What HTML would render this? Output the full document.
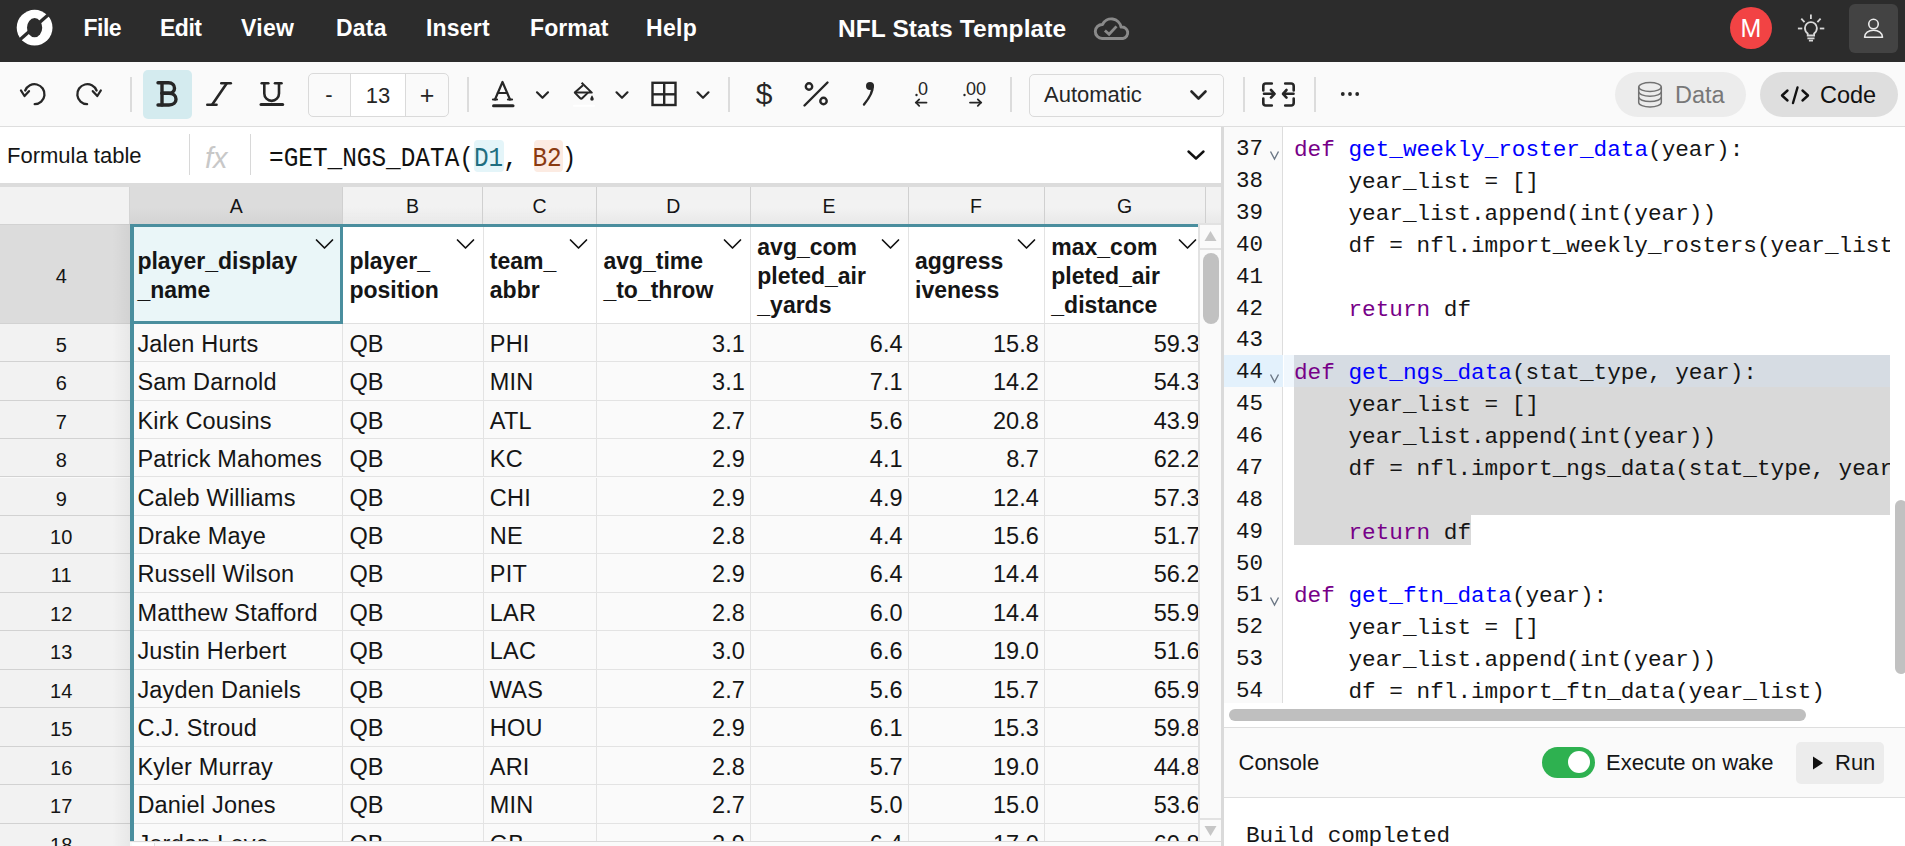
<!DOCTYPE html><html><head><meta charset="utf-8"><style>
*{box-sizing:border-box;margin:0;padding:0}
html,body{width:1905px;height:846px;overflow:hidden;background:#fff;font-family:"Liberation Sans",sans-serif;color:#151515}
.a{position:absolute}
svg{position:absolute;overflow:visible}
.menu{position:absolute;top:14px;font-size:23px;font-weight:700;color:#fff;line-height:28px;white-space:pre;letter-spacing:-0.4px}
.sep{position:absolute;width:2px;background:#dcdcdc}
.ch{position:absolute;top:187px;height:37px;border-right:1.5px solid #d0d0d0;text-align:center;font-size:19.5px;line-height:39px;color:#151515}
.rh{position:absolute;left:0;width:130.4px;padding-right:8px;background:#f2f2f2;border-bottom:1px solid #d2d2d2;text-align:center;font-size:20px;color:#151515}
.c{position:absolute;border-right:1px solid #e3e3e3;border-bottom:1px solid #e3e3e3;font-size:23.5px;white-space:nowrap;overflow:hidden;color:#151515;height:38.45px;line-height:40px;letter-spacing:0.2px}
.l{padding-left:6px}
.r{text-align:right;padding-right:5.5px;letter-spacing:0}
.hc{position:absolute;border-right:1px solid #e3e3e3;background:#fff;font-size:23px;font-weight:700;line-height:29px;color:#151515;display:flex;align-items:center;padding-left:6px}
.ln{position:absolute;left:0;width:39px;text-align:right;font-family:"Liberation Mono",monospace;font-size:22.5px;color:#151515;height:32px;line-height:35px}
.cl{position:absolute;left:70px;font-family:"Liberation Mono",monospace;font-size:22.7px;color:#151515;white-space:pre;height:32px;line-height:37px}
.kw{color:#770088}.fn{color:#0000ff}
</style></head><body>
<div class="a" style="left:0;top:0;width:1905px;height:62px;background:#2c2c2c"></div>
<svg style="left:0;top:0" width="70" height="62" viewBox="0 0 70 62">
<circle cx="34.6" cy="27.7" r="17.9" fill="#fff"/>
<ellipse cx="34.6" cy="27.7" rx="7.6" ry="9.6" fill="#2c2c2c"/>
<line x1="19" y1="40.5" x2="50" y2="13.3" stroke="#2c2c2c" stroke-width="3.3"/>
</svg>
<div class="menu" style="left:83.5px;letter-spacing:-0.5px">File</div>
<div class="menu" style="left:160px;letter-spacing:-0.5px">Edit</div>
<div class="menu" style="left:241px;letter-spacing:0.3px">View</div>
<div class="menu" style="left:336px;letter-spacing:0.2px">Data</div>
<div class="menu" style="left:426px;letter-spacing:0.2px">Insert</div>
<div class="menu" style="left:530px;letter-spacing:0.1px">Format</div>
<div class="menu" style="left:646px;letter-spacing:0.3px">Help</div>
<div class="menu" style="left:838px;font-size:24.5px;top:14.5px;letter-spacing:0.1px">NFL Stats Template</div>
<svg style="left:1090px;top:12px" width="45" height="34" viewBox="0 0 45 34">
<path d="M12.1 26.5 A7 7 0 0 1 12.5 12.5 A9.8 9.8 0 0 1 31 15.1 A5.7 5.7 0 0 1 32.9 26.5 Z" fill="none" stroke="#8a8a8a" stroke-width="2.9" stroke-linejoin="round"/>
<path d="M14.9 18.5 L19.1 22.3 L26.5 14.4" fill="none" stroke="#8a8a8a" stroke-width="2.8" stroke-linejoin="miter"/>
</svg>
<div class="a" style="left:1730px;top:7px;width:42px;height:42px;border-radius:50%;background:#f24344"></div>
<div class="a" style="left:1730px;top:7px;width:42px;height:42px;text-align:center;line-height:42px;font-size:25px;color:#fff">M</div>
<svg style="left:1790px;top:10px" width="40" height="40" viewBox="0 0 40 40">
<g fill="none" stroke="#d9d9d9" stroke-width="1.8">
<path d="M20.9 4.5 V9.1"/><path d="M11.3 8.7 L14.5 12.1"/><path d="M30.6 8.7 L27.4 12.1"/>
<path d="M7.9 18.5 H12.3"/><path d="M29.8 18.5 H34.3"/>
<path d="M17.7 25.5 V23.5 C15.5 22 14.9 20 14.9 18.1 A6 6 0 0 1 26.9 18.1 C26.9 20 26.3 22 24.1 23.5 V25.5 Z"/>
<path d="M17.4 28.4 H24.5"/><path d="M18.9 30.6 H23"/>
</g></svg>
<div class="a" style="left:1849px;top:4px;width:49px;height:49px;border-radius:6px;background:#434343"></div>
<svg style="left:1849px;top:4px" width="49" height="49" viewBox="0 0 49 49">
<g fill="none" stroke="#ebebeb" stroke-width="1.6">
<circle cx="24.5" cy="20.05" r="4.75"/>
<path d="M15.6 33.3 C15.6 29 19.5 26.3 24.5 26.3 C29.5 26.3 33.5 29 33.5 33.3 Z" stroke-linejoin="round"/>
</g></svg>
<div class="a" style="left:0;top:62px;width:1905px;height:65px;background:#fafafa;border-bottom:1px solid #dedede"></div>
<svg style="left:0;top:62px" width="120" height="64" viewBox="0 0 120 64">
<g fill="none" stroke="#262626" stroke-width="2.3" stroke-linecap="round" stroke-linejoin="round">
<path d="M34.7 42.2 A10 10 0 1 0 25.2 28.5"/>
<path d="M21 28.5 L24.5 34 L29 29.2"/>
<path d="M87.1 42.2 A10 10 0 1 1 96.6 28.5"/>
<path d="M100.8 28.5 L97.3 34 L92.8 29.2"/>
</g></svg>
<div class="sep" style="left:130px;top:77px;height:35px"></div>
<div class="a" style="left:143px;top:70px;width:49px;height:49px;border-radius:5px;background:#d4ebef"></div>
<svg style="left:150px;top:76px" width="40" height="36" viewBox="0 0 40 36"><g fill="none" stroke="#262626" stroke-width="3.4" stroke-linecap="round" stroke-linejoin="round">
<path d="M8 6.8 H18.5 C22.5 6.8 24.5 9.5 24.5 12.2 C24.5 15 22.5 17.3 18.5 17.3 H12"/>
<path d="M12 17.3 H19 C23.5 17.3 26 20 26 23.2 C26 26.5 23.5 29 19 29 H8"/>
<path d="M12 6.8 V29"/></g></svg>
<svg style="left:195px;top:62px" width="100" height="64" viewBox="0 0 100 64">
<g fill="none" stroke="#262626" stroke-width="2.6" stroke-linecap="round">
<path d="M26.3 21.3 H35.8"/><path d="M12.3 42.7 H21.5"/><path d="M31.8 21.3 L17.1 42.7"/>
<path d="M66.7 21.3 H73.3"/><path d="M80 21.3 H86.5"/>
<path d="M69.3 21.3 V31.5 A7.35 7.35 0 0 0 84 31.5 V21.3"/>
<path d="M66 42.5 H87.7" stroke-width="3"/>
</g></svg>
<div class="a" style="left:307.5px;top:72.5px;width:141px;height:44px;border:1px solid #dadada;border-radius:5px;background:#fafafa"></div>
<div class="a" style="left:350px;top:73.5px;width:56px;height:42px;background:#fff;border-left:1px solid #dadada;border-right:1px solid #dadada"></div>
<div class="a" style="left:308px;top:72.5px;width:42px;height:44px;text-align:center;line-height:44px;font-size:22px;color:#262626">-</div>
<div class="a" style="left:350px;top:72.5px;width:56px;height:44px;text-align:center;line-height:45px;font-size:22px;color:#262626">13</div>
<div class="a" style="left:406px;top:72.5px;width:42px;height:44px;text-align:center;line-height:44px;font-size:25px;color:#262626">+</div>
<div class="sep" style="left:467px;top:77px;height:35px"></div>
<svg style="left:480px;top:62px" width="250" height="64" viewBox="0 0 250 64">
<g fill="none" stroke="#262626" stroke-width="2.2" stroke-linecap="round" stroke-linejoin="round">
<path d="M15 37.5 l7.5 -17.5 l7.5 17.5"/><path d="M17.8 31 h9.4"/>
<path d="M13 37.5 h4"/><path d="M28 37.5 h4"/>
<path d="M57 30.3 l5.5 5.5 l5.5 -5.5"/>
<path d="M136.5 30.3 l5.5 5.5 l5.5 -5.5"/>
<path d="M217.5 30.3 l5.5 5.5 l5.5 -5.5"/>
</g>
<rect x="12" y="42.2" width="22.5" height="3" rx="1.5" fill="#262626"/>
<g fill="none" stroke="#262626" stroke-width="2" stroke-linejoin="round">
<path d="M101.6 20.7 L111.8 30.6 H94.8"/>
<path d="M103 23.2 L94.8 30.6 L100 36 Q101.2 37.2 102.4 36 L108 30.6"/>
</g>
<path d="M112 33.2 q1.8 2.6 1.8 3.8 a1.8 1.8 0 0 1 -3.6 0 q0 -1.2 1.8 -3.8z" fill="#262626"/>
<rect x="93" y="42.8" width="22" height="2" rx="1" fill="#fff"/>
<g fill="none" stroke="#262626" stroke-width="2.4">
<rect x="172.5" y="20.8" width="23" height="22.2"/>
<path d="M184.2 20.8 v22.2"/><path d="M172.5 32.3 h23"/>
</g>
</svg>
<div class="sep" style="left:728px;top:77px;height:35px"></div>
<div class="a" style="left:748px;top:76px;width:32px;text-align:center;font-size:30px;line-height:36px;color:#262626">$</div>
<svg style="left:790px;top:62px" width="220" height="64" viewBox="0 0 220 64">
<g fill="none" stroke="#262626" stroke-width="2.4" stroke-linecap="round">
<circle cx="19" cy="24.5" r="3.2"/><circle cx="33.5" cy="39" r="3.2"/>
<path d="M37.5 20.5 l-23 23"/>
<path d="M82.5 23.5 Q83.5 31 74 42.5"/>
<path d="M126 40.6 h10.5" stroke-width="1.8"/><path d="M129.2 37.4 l-3.2 3.2 l3.2 3.2" stroke-width="1.8"/>
<path d="M180 40.6 h11" stroke-width="1.8"/><path d="M187.8 37.4 l3.2 3.2 l-3.2 3.2" stroke-width="1.8"/>
</g>
<circle cx="80" cy="24" r="4" fill="#262626"/>
<circle cx="126.5" cy="33" r="1.2" fill="#262626"/>
<circle cx="174.5" cy="33" r="1.2" fill="#262626"/>
</svg>
<div class="a" style="left:918px;top:79px;font-size:18px;line-height:20px;color:#262626">0</div>
<div class="a" style="left:966px;top:79px;font-size:18px;line-height:20px;color:#262626">00</div>
<div class="sep" style="left:1010px;top:77px;height:35px"></div>
<div class="a" style="left:1028.5px;top:73.5px;width:195px;height:43px;border:1px solid #dadada;border-radius:5px;background:#fafafa"></div>
<div class="a" style="left:1044px;top:72.5px;font-size:22px;line-height:43px;color:#262626">Automatic</div>
<svg style="left:1180px;top:73px" width="40" height="44" viewBox="0 0 40 44">
<path d="M11.5 18.5 l7 7 l7 -7" fill="none" stroke="#262626" stroke-width="2.6" stroke-linecap="round" stroke-linejoin="round"/></svg>
<div class="sep" style="left:1242.5px;top:77px;height:35px"></div>
<svg style="left:1250px;top:62px" width="120" height="64" viewBox="0 0 120 64">
<g fill="none" stroke="#262626" stroke-width="2.6" stroke-linecap="round" stroke-linejoin="round">
<path d="M13.3 28.5 v-4.5 a2.5 2.5 0 0 1 2.5 -2.5 h6"/><path d="M13.3 36.5 v4.5 a2.5 2.5 0 0 0 2.5 2.5 h6"/>
<path d="M43.7 28.5 v-4.5 a2.5 2.5 0 0 0 -2.5 -2.5 h-6"/><path d="M43.7 36.5 v4.5 a2.5 2.5 0 0 1 -2.5 2.5 h-6"/>
<path d="M14 31.8 h10"/><path d="M21 28 l3.5 3.8 l-3.5 3.8"/>
<path d="M43.5 31.8 h-10"/><path d="M36.5 28 l-3.5 3.8 l3.5 3.8"/>
</g>
<circle cx="92.8" cy="32" r="1.9" fill="#262626"/><circle cx="100" cy="32" r="1.9" fill="#262626"/><circle cx="107.2" cy="32" r="1.9" fill="#262626"/>
</svg>
<div class="sep" style="left:1314px;top:77px;height:35px"></div>
<div class="a" style="left:1615px;top:72px;width:131px;height:45px;border-radius:23px;background:#ececec"></div>
<svg style="left:1630px;top:72px" width="40" height="45" viewBox="0 0 40 45">
<g fill="none" stroke="#727272" stroke-width="1.5">
<ellipse cx="20" cy="15" rx="11.3" ry="4.45"/>
<path d="M8.7 15 V30.45 A11.3 4.45 0 0 0 31.3 30.45 V15"/>
<path d="M8.7 19.75 A11.3 4.45 0 0 0 31.3 19.75"/><path d="M8.7 25.05 A11.3 4.45 0 0 0 31.3 25.05"/>
</g></svg>
<div class="a" style="left:1675px;top:73px;font-size:23.5px;line-height:45px;color:#787878">Data</div>
<div class="a" style="left:1760px;top:72px;width:138px;height:45px;border-radius:23px;background:#dedede"></div>
<svg style="left:1775px;top:72px" width="40" height="45" viewBox="0 0 40 45">
<g fill="none" stroke="#111" stroke-width="2.4" stroke-linecap="round" stroke-linejoin="round">
<path d="M12.5 18.5 l-5.5 5 l5.5 5"/><path d="M27.5 18.5 l5.5 5 l-5.5 5"/><path d="M22.5 15.5 l-4.5 15.5"/>
</g></svg>
<div class="a" style="left:1820px;top:73px;font-size:23.5px;line-height:45px;color:#111">Code</div>
<div class="a" style="left:0;top:127px;width:1221px;height:56px;background:#fff"></div>
<div class="a" style="left:7px;top:127px;font-size:22px;line-height:57px;color:#151515">Formula table</div>
<div class="sep" style="left:188.5px;top:134px;height:41px;width:1.5px;background:#d8d8d8"></div>
<div class="a" style="left:205px;top:127px;font-size:29px;font-style:italic;line-height:62px;color:#c8c8c8">fx</div>
<div class="sep" style="left:249.5px;top:134px;height:41px;width:1.5px;background:#d8d8d8"></div>
<div class="a" style="left:473.5px;top:140px;width:30px;height:32px;border-radius:4px;background:#e4f5f9"></div>
<div class="a" style="left:533.5px;top:140px;width:29.5px;height:32px;border-radius:4px;background:#fcebe2"></div>
<div class="a" style="left:269px;top:128px;font-family:'Liberation Mono';font-size:24.4px;line-height:63px;white-space:pre;color:#111;transform:scaleY(1.13);transform-origin:0 38px">=GET_NGS_DATA(<span style="color:#1f6e80">D1</span>, <span style="color:#8a3a10">B2</span>)</div>
<svg style="left:1180px;top:140px" width="30" height="30" viewBox="0 0 30 30">
<path d="M8.5 11.5 l7.5 7 l7.5 -7" fill="none" stroke="#111" stroke-width="2.4" stroke-linecap="round" stroke-linejoin="round"/></svg>
<div class="a" style="left:0;top:182.5px;width:1221px;height:4.5px;background:#dcdcdc"></div>
<div class="a" style="left:0;top:187px;width:1221px;height:37px;background:#f2f2f2"></div>
<div class="a" style="left:0;top:187px;width:130.4px;height:37px;border-right:1px solid #d4d4d4"></div>
<div class="ch" style="left:1205px;width:16.7px;background:linear-gradient(to bottom,#f2f2f2 55%,rgba(0,0,0,0.04)),#f2f2f2"></div>
<div class="ch" style="left:1044.3px;width:161.40000000000003px;background:linear-gradient(to bottom,#f2f2f2 55%,rgba(0,0,0,0.04)),#f2f2f2">G</div>
<div class="ch" style="left:908px;width:136.99999999999994px;background:linear-gradient(to bottom,#f2f2f2 55%,rgba(0,0,0,0.04)),#f2f2f2">F</div>
<div class="ch" style="left:750.3px;width:158.40000000000003px;background:linear-gradient(to bottom,#f2f2f2 55%,rgba(0,0,0,0.04)),#f2f2f2">E</div>
<div class="ch" style="left:596.4px;width:154.59999999999997px;background:linear-gradient(to bottom,#f2f2f2 55%,rgba(0,0,0,0.04)),#f2f2f2">D</div>
<div class="ch" style="left:482.8px;width:114.29999999999997px;background:linear-gradient(to bottom,#f2f2f2 55%,rgba(0,0,0,0.04)),#f2f2f2">C</div>
<div class="ch" style="left:342.4px;width:141.10000000000002px;background:linear-gradient(to bottom,#f2f2f2 55%,rgba(0,0,0,0.04)),#f2f2f2">B</div>
<div class="ch" style="left:130.4px;width:212.69999999999996px;background:linear-gradient(to bottom,#dcdcdc 55%,rgba(0,0,0,0.04)),#dcdcdc">A</div>
<div class="a" style="left:0;top:224px;width:1221px;height:617px;background:#fafafa"></div>
<div class="rh" style="top:224px;height:99.69999999999999px;line-height:102.69999999999999px;background:#dcdcdc;border-top:1px solid #d2d2d2">4</div>
<div class="rh" style="top:323.7px;height:38.45px;line-height:42.45px">5</div>
<div class="c l" style="left:131.4px;top:323.7px;width:211.99999999999997px">Jalen Hurts</div>
<div class="c l" style="left:343.4px;top:323.7px;width:140.40000000000003px">QB</div>
<div class="c l" style="left:483.8px;top:323.7px;width:113.59999999999997px">PHI</div>
<div class="c r" style="left:597.4px;top:323.7px;width:153.89999999999998px">3.1</div>
<div class="c r" style="left:751.3px;top:323.7px;width:157.70000000000005px">6.4</div>
<div class="c r" style="left:909px;top:323.7px;width:136.29999999999995px">15.8</div>
<div class="c r" style="left:1045.3px;top:323.7px;width:160.70000000000005px">59.3</div>
<div class="rh" style="top:362.15px;height:38.45px;line-height:42.45px">6</div>
<div class="c l" style="left:131.4px;top:362.15px;width:211.99999999999997px">Sam Darnold</div>
<div class="c l" style="left:343.4px;top:362.15px;width:140.40000000000003px">QB</div>
<div class="c l" style="left:483.8px;top:362.15px;width:113.59999999999997px">MIN</div>
<div class="c r" style="left:597.4px;top:362.15px;width:153.89999999999998px">3.1</div>
<div class="c r" style="left:751.3px;top:362.15px;width:157.70000000000005px">7.1</div>
<div class="c r" style="left:909px;top:362.15px;width:136.29999999999995px">14.2</div>
<div class="c r" style="left:1045.3px;top:362.15px;width:160.70000000000005px">54.3</div>
<div class="rh" style="top:400.6px;height:38.45px;line-height:42.45px">7</div>
<div class="c l" style="left:131.4px;top:400.6px;width:211.99999999999997px">Kirk Cousins</div>
<div class="c l" style="left:343.4px;top:400.6px;width:140.40000000000003px">QB</div>
<div class="c l" style="left:483.8px;top:400.6px;width:113.59999999999997px">ATL</div>
<div class="c r" style="left:597.4px;top:400.6px;width:153.89999999999998px">2.7</div>
<div class="c r" style="left:751.3px;top:400.6px;width:157.70000000000005px">5.6</div>
<div class="c r" style="left:909px;top:400.6px;width:136.29999999999995px">20.8</div>
<div class="c r" style="left:1045.3px;top:400.6px;width:160.70000000000005px">43.9</div>
<div class="rh" style="top:439.05px;height:38.45px;line-height:42.45px">8</div>
<div class="c l" style="left:131.4px;top:439.05px;width:211.99999999999997px">Patrick Mahomes</div>
<div class="c l" style="left:343.4px;top:439.05px;width:140.40000000000003px">QB</div>
<div class="c l" style="left:483.8px;top:439.05px;width:113.59999999999997px">KC</div>
<div class="c r" style="left:597.4px;top:439.05px;width:153.89999999999998px">2.9</div>
<div class="c r" style="left:751.3px;top:439.05px;width:157.70000000000005px">4.1</div>
<div class="c r" style="left:909px;top:439.05px;width:136.29999999999995px">8.7</div>
<div class="c r" style="left:1045.3px;top:439.05px;width:160.70000000000005px">62.2</div>
<div class="rh" style="top:477.5px;height:38.45px;line-height:42.45px">9</div>
<div class="c l" style="left:131.4px;top:477.5px;width:211.99999999999997px">Caleb Williams</div>
<div class="c l" style="left:343.4px;top:477.5px;width:140.40000000000003px">QB</div>
<div class="c l" style="left:483.8px;top:477.5px;width:113.59999999999997px">CHI</div>
<div class="c r" style="left:597.4px;top:477.5px;width:153.89999999999998px">2.9</div>
<div class="c r" style="left:751.3px;top:477.5px;width:157.70000000000005px">4.9</div>
<div class="c r" style="left:909px;top:477.5px;width:136.29999999999995px">12.4</div>
<div class="c r" style="left:1045.3px;top:477.5px;width:160.70000000000005px">57.3</div>
<div class="rh" style="top:515.95px;height:38.45px;line-height:42.45px">10</div>
<div class="c l" style="left:131.4px;top:515.95px;width:211.99999999999997px">Drake Maye</div>
<div class="c l" style="left:343.4px;top:515.95px;width:140.40000000000003px">QB</div>
<div class="c l" style="left:483.8px;top:515.95px;width:113.59999999999997px">NE</div>
<div class="c r" style="left:597.4px;top:515.95px;width:153.89999999999998px">2.8</div>
<div class="c r" style="left:751.3px;top:515.95px;width:157.70000000000005px">4.4</div>
<div class="c r" style="left:909px;top:515.95px;width:136.29999999999995px">15.6</div>
<div class="c r" style="left:1045.3px;top:515.95px;width:160.70000000000005px">51.7</div>
<div class="rh" style="top:554.4px;height:38.45px;line-height:42.45px">11</div>
<div class="c l" style="left:131.4px;top:554.4px;width:211.99999999999997px">Russell Wilson</div>
<div class="c l" style="left:343.4px;top:554.4px;width:140.40000000000003px">QB</div>
<div class="c l" style="left:483.8px;top:554.4px;width:113.59999999999997px">PIT</div>
<div class="c r" style="left:597.4px;top:554.4px;width:153.89999999999998px">2.9</div>
<div class="c r" style="left:751.3px;top:554.4px;width:157.70000000000005px">6.4</div>
<div class="c r" style="left:909px;top:554.4px;width:136.29999999999995px">14.4</div>
<div class="c r" style="left:1045.3px;top:554.4px;width:160.70000000000005px">56.2</div>
<div class="rh" style="top:592.85px;height:38.45px;line-height:42.45px">12</div>
<div class="c l" style="left:131.4px;top:592.85px;width:211.99999999999997px">Matthew Stafford</div>
<div class="c l" style="left:343.4px;top:592.85px;width:140.40000000000003px">QB</div>
<div class="c l" style="left:483.8px;top:592.85px;width:113.59999999999997px">LAR</div>
<div class="c r" style="left:597.4px;top:592.85px;width:153.89999999999998px">2.8</div>
<div class="c r" style="left:751.3px;top:592.85px;width:157.70000000000005px">6.0</div>
<div class="c r" style="left:909px;top:592.85px;width:136.29999999999995px">14.4</div>
<div class="c r" style="left:1045.3px;top:592.85px;width:160.70000000000005px">55.9</div>
<div class="rh" style="top:631.3px;height:38.45px;line-height:42.45px">13</div>
<div class="c l" style="left:131.4px;top:631.3px;width:211.99999999999997px">Justin Herbert</div>
<div class="c l" style="left:343.4px;top:631.3px;width:140.40000000000003px">QB</div>
<div class="c l" style="left:483.8px;top:631.3px;width:113.59999999999997px">LAC</div>
<div class="c r" style="left:597.4px;top:631.3px;width:153.89999999999998px">3.0</div>
<div class="c r" style="left:751.3px;top:631.3px;width:157.70000000000005px">6.6</div>
<div class="c r" style="left:909px;top:631.3px;width:136.29999999999995px">19.0</div>
<div class="c r" style="left:1045.3px;top:631.3px;width:160.70000000000005px">51.6</div>
<div class="rh" style="top:669.75px;height:38.45px;line-height:42.45px">14</div>
<div class="c l" style="left:131.4px;top:669.75px;width:211.99999999999997px">Jayden Daniels</div>
<div class="c l" style="left:343.4px;top:669.75px;width:140.40000000000003px">QB</div>
<div class="c l" style="left:483.8px;top:669.75px;width:113.59999999999997px">WAS</div>
<div class="c r" style="left:597.4px;top:669.75px;width:153.89999999999998px">2.7</div>
<div class="c r" style="left:751.3px;top:669.75px;width:157.70000000000005px">5.6</div>
<div class="c r" style="left:909px;top:669.75px;width:136.29999999999995px">15.7</div>
<div class="c r" style="left:1045.3px;top:669.75px;width:160.70000000000005px">65.9</div>
<div class="rh" style="top:708.2px;height:38.45px;line-height:42.45px">15</div>
<div class="c l" style="left:131.4px;top:708.2px;width:211.99999999999997px">C.J. Stroud</div>
<div class="c l" style="left:343.4px;top:708.2px;width:140.40000000000003px">QB</div>
<div class="c l" style="left:483.8px;top:708.2px;width:113.59999999999997px">HOU</div>
<div class="c r" style="left:597.4px;top:708.2px;width:153.89999999999998px">2.9</div>
<div class="c r" style="left:751.3px;top:708.2px;width:157.70000000000005px">6.1</div>
<div class="c r" style="left:909px;top:708.2px;width:136.29999999999995px">15.3</div>
<div class="c r" style="left:1045.3px;top:708.2px;width:160.70000000000005px">59.8</div>
<div class="rh" style="top:746.6500000000001px;height:38.45px;line-height:42.45px">16</div>
<div class="c l" style="left:131.4px;top:746.6500000000001px;width:211.99999999999997px">Kyler Murray</div>
<div class="c l" style="left:343.4px;top:746.6500000000001px;width:140.40000000000003px">QB</div>
<div class="c l" style="left:483.8px;top:746.6500000000001px;width:113.59999999999997px">ARI</div>
<div class="c r" style="left:597.4px;top:746.6500000000001px;width:153.89999999999998px">2.8</div>
<div class="c r" style="left:751.3px;top:746.6500000000001px;width:157.70000000000005px">5.7</div>
<div class="c r" style="left:909px;top:746.6500000000001px;width:136.29999999999995px">19.0</div>
<div class="c r" style="left:1045.3px;top:746.6500000000001px;width:160.70000000000005px">44.8</div>
<div class="rh" style="top:785.1px;height:38.45px;line-height:42.45px">17</div>
<div class="c l" style="left:131.4px;top:785.1px;width:211.99999999999997px">Daniel Jones</div>
<div class="c l" style="left:343.4px;top:785.1px;width:140.40000000000003px">QB</div>
<div class="c l" style="left:483.8px;top:785.1px;width:113.59999999999997px">MIN</div>
<div class="c r" style="left:597.4px;top:785.1px;width:153.89999999999998px">2.7</div>
<div class="c r" style="left:751.3px;top:785.1px;width:157.70000000000005px">5.0</div>
<div class="c r" style="left:909px;top:785.1px;width:136.29999999999995px">15.0</div>
<div class="c r" style="left:1045.3px;top:785.1px;width:160.70000000000005px">53.6</div>
<div class="rh" style="top:823.55px;height:38.45px;line-height:42.45px">18</div>
<div class="c l" style="left:131.4px;top:823.55px;width:211.99999999999997px">Jordan Love</div>
<div class="c l" style="left:343.4px;top:823.55px;width:140.40000000000003px">QB</div>
<div class="c l" style="left:483.8px;top:823.55px;width:113.59999999999997px">GB</div>
<div class="c r" style="left:597.4px;top:823.55px;width:153.89999999999998px">2.9</div>
<div class="c r" style="left:751.3px;top:823.55px;width:157.70000000000005px">6.4</div>
<div class="c r" style="left:909px;top:823.55px;width:136.29999999999995px">17.0</div>
<div class="c r" style="left:1045.3px;top:823.55px;width:160.70000000000005px">60.8</div>
<div class="hc" style="left:131.4px;top:224px;width:211.99999999999997px;height:99.69999999999999px;border-bottom:1px solid #e0e0e0;background:#eaf6f8"><div style="padding-top:5.5px">player_display<br>_name</div></div>
<svg style="left:315.4px;top:236px" width="20" height="16" viewBox="0 0 20 16"><path d="M1.5 4 l8 8 l8 -8" fill="none" stroke="#111" stroke-width="1.7" stroke-linecap="round" stroke-linejoin="round"/></svg>
<div class="hc" style="left:343.4px;top:224px;width:140.40000000000003px;height:99.69999999999999px;border-bottom:1px solid #e0e0e0;background:#fff"><div style="padding-top:5.5px">player_<br>position</div></div>
<svg style="left:455.8px;top:236px" width="20" height="16" viewBox="0 0 20 16"><path d="M1.5 4 l8 8 l8 -8" fill="none" stroke="#111" stroke-width="1.7" stroke-linecap="round" stroke-linejoin="round"/></svg>
<div class="hc" style="left:483.8px;top:224px;width:113.59999999999997px;height:99.69999999999999px;border-bottom:1px solid #e0e0e0;background:#fff"><div style="padding-top:5.5px">team_<br>abbr</div></div>
<svg style="left:569.4px;top:236px" width="20" height="16" viewBox="0 0 20 16"><path d="M1.5 4 l8 8 l8 -8" fill="none" stroke="#111" stroke-width="1.7" stroke-linecap="round" stroke-linejoin="round"/></svg>
<div class="hc" style="left:597.4px;top:224px;width:153.89999999999998px;height:99.69999999999999px;border-bottom:1px solid #e0e0e0;background:#fff"><div style="padding-top:5.5px">avg_time<br>_to_throw</div></div>
<svg style="left:723.3px;top:236px" width="20" height="16" viewBox="0 0 20 16"><path d="M1.5 4 l8 8 l8 -8" fill="none" stroke="#111" stroke-width="1.7" stroke-linecap="round" stroke-linejoin="round"/></svg>
<div class="hc" style="left:751.3px;top:224px;width:157.70000000000005px;height:99.69999999999999px;border-bottom:1px solid #e0e0e0;background:#fff"><div style="padding-top:5.5px">avg_com<br>pleted_air<br>_yards</div></div>
<svg style="left:881px;top:236px" width="20" height="16" viewBox="0 0 20 16"><path d="M1.5 4 l8 8 l8 -8" fill="none" stroke="#111" stroke-width="1.7" stroke-linecap="round" stroke-linejoin="round"/></svg>
<div class="hc" style="left:909px;top:224px;width:136.29999999999995px;height:99.69999999999999px;border-bottom:1px solid #e0e0e0;background:#fff"><div style="padding-top:5.5px">aggress<br>iveness</div></div>
<svg style="left:1017.3px;top:236px" width="20" height="16" viewBox="0 0 20 16"><path d="M1.5 4 l8 8 l8 -8" fill="none" stroke="#111" stroke-width="1.7" stroke-linecap="round" stroke-linejoin="round"/></svg>
<div class="hc" style="left:1045.3px;top:224px;width:160.70000000000005px;height:99.69999999999999px;border-bottom:1px solid #e0e0e0;background:#fff"><div style="padding-top:5.5px">max_com<br>pleted_air<br>_distance</div></div>
<svg style="left:1178px;top:236px" width="20" height="16" viewBox="0 0 20 16"><path d="M1.5 4 l8 8 l8 -8" fill="none" stroke="#111" stroke-width="1.7" stroke-linecap="round" stroke-linejoin="round"/></svg>
<div class="a" style="left:130.4px;top:224px;width:213px;height:100px;border:3.3px solid #4a8e9e"></div>
<div class="a" style="left:130.4px;top:224px;width:1068px;height:3.2px;background:#4a8e9e"></div>
<div class="a" style="left:130.4px;top:224px;width:3.3px;height:617px;background:#4a8e9e"></div>
<div class="a" style="left:1197.8px;top:223.3px;width:23.2px;height:617.7px;background:#fafafa;border-left:2px solid #e2e2e2;border-top:2.5px solid #e2e2e2"></div>
<div class="a" style="left:1199.8px;top:225.8px;width:21.2px;height:24px;border-bottom:2px solid #e2e2e2"></div>
<svg style="left:1199px;top:226px" width="22" height="23" viewBox="0 0 22 23"><path d="M11.5 5 l6 10 h-12 z" fill="#c6c6c6"/></svg>
<div class="a" style="left:1203px;top:253px;width:15.5px;height:70.5px;border-radius:8px;background:#c1c1c1"></div>
<div class="a" style="left:1199.8px;top:817.5px;width:21.2px;height:23.5px;border-top:2px solid #e2e2e2"></div>
<svg style="left:1199px;top:818px" width="22" height="23" viewBox="0 0 22 23"><path d="M5.5 8 h12 l-6 10 z" fill="#c6c6c6"/></svg>
<div class="a" style="left:130.4px;top:841px;width:1091px;height:5px;background:#fafafa;border-top:1.5px solid #dadada"></div>
<div class="a" style="left:131.5px;top:843px;width:23.5px;height:3px;background:#fff;border-right:1px solid #e0e0e0"></div>
<div class="a" style="left:112px;top:224px;width:18.4px;height:622px;background:linear-gradient(to right,rgba(0,0,0,0),rgba(0,0,0,0.045))"></div>
<div class="a" style="left:1221px;top:127px;width:3px;height:719px;background:#dadada"></div>
<div class="a" style="left:1224px;top:127px;width:681px;height:600px;background:#fff;overflow:hidden">
<div class="a" style="left:0;top:0;width:59px;height:576px;background:#fafafa;border-right:1px solid #dddddd"></div>
<div class="a" style="left:0;top:228.26px;width:58.5px;height:31.88px;background:#e3f1fc"></div>
<div class="a" style="left:59.5px;top:228.26px;width:10.5px;height:31.88px;background:#f0f7fd"></div>
<div class="a" style="left:70px;top:228.26px;width:596px;height:31.88px;background:#d6dce3"></div>
<div class="a" style="left:70px;top:260.14px;width:596px;height:127.52px;background:#d9d9d9"></div>
<div class="a" style="left:70px;top:387.65999999999997px;width:177px;height:29.88px;background:#d9d9d9"></div>
<div class="ln" style="top:5.099999999999994px">37</div>
<svg style="left:45px;top:5.099999999999994px" width="14" height="32" viewBox="0 0 14 32"><path d="M1.5 19.5 L5.5 27 L9.5 19.5" fill="none" stroke="#6b7785" stroke-width="1.4"/></svg>
<div class="cl" style="top:5.099999999999994px"><span class="kw">def</span> <span class="fn">get_weekly_roster_data</span>(year):</div>
<div class="ln" style="top:36.97999999999999px">38</div>
<div class="cl" style="top:36.97999999999999px">    year_list = []</div>
<div class="ln" style="top:68.85999999999999px">39</div>
<div class="cl" style="top:68.85999999999999px">    year_list.append(int(year))</div>
<div class="ln" style="top:100.74px">40</div>
<div class="cl" style="top:100.74px">    df = nfl.import_weekly_rosters(year_list</div>
<div class="ln" style="top:132.62px">41</div>
<div class="cl" style="top:132.62px"></div>
<div class="ln" style="top:164.5px">42</div>
<div class="cl" style="top:164.5px">    <span class="kw">return</span> df</div>
<div class="ln" style="top:196.38px">43</div>
<div class="cl" style="top:196.38px"></div>
<div class="ln" style="top:228.26px">44</div>
<svg style="left:45px;top:228.26px" width="14" height="32" viewBox="0 0 14 32"><path d="M1.5 19.5 L5.5 27 L9.5 19.5" fill="none" stroke="#6b7785" stroke-width="1.4"/></svg>
<div class="cl" style="top:228.26px"><span class="kw">def</span> <span class="fn">get_ngs_data</span>(stat_type, year):</div>
<div class="ln" style="top:260.14px">45</div>
<div class="cl" style="top:260.14px">    year_list = []</div>
<div class="ln" style="top:292.02px">46</div>
<div class="cl" style="top:292.02px">    year_list.append(int(year))</div>
<div class="ln" style="top:323.9px">47</div>
<div class="cl" style="top:323.9px">    df = nfl.import_ngs_data(stat_type, year</div>
<div class="ln" style="top:355.78px">48</div>
<div class="cl" style="top:355.78px"></div>
<div class="ln" style="top:387.65999999999997px">49</div>
<div class="cl" style="top:387.65999999999997px">    <span class="kw">return</span> df</div>
<div class="ln" style="top:419.53999999999996px">50</div>
<div class="cl" style="top:419.53999999999996px"></div>
<div class="ln" style="top:451.41999999999996px">51</div>
<svg style="left:45px;top:451.41999999999996px" width="14" height="32" viewBox="0 0 14 32"><path d="M1.5 19.5 L5.5 27 L9.5 19.5" fill="none" stroke="#6b7785" stroke-width="1.4"/></svg>
<div class="cl" style="top:451.41999999999996px"><span class="kw">def</span> <span class="fn">get_ftn_data</span>(year):</div>
<div class="ln" style="top:483.29999999999995px">52</div>
<div class="cl" style="top:483.29999999999995px">    year_list = []</div>
<div class="ln" style="top:515.18px">53</div>
<div class="cl" style="top:515.18px">    year_list.append(int(year))</div>
<div class="ln" style="top:547.0600000000001px">54</div>
<div class="cl" style="top:547.0600000000001px">    df = nfl.import_ftn_data(year_list)</div>
<div class="a" style="left:666px;top:0;width:15px;height:600px;background:#fff"></div>
<div class="a" style="left:671px;top:373px;width:12px;height:174px;border-radius:6px;background:#c1c1c1"></div>
<div class="a" style="left:5px;top:582px;width:577px;height:12px;border-radius:6px;background:#bfbfbf"></div>
</div>
<div class="a" style="left:1224px;top:727px;width:681px;height:70.5px;background:#fafafa;border-top:1.5px solid #dedede;border-bottom:1.5px solid #dedede"></div>
<div class="a" style="left:1238.5px;top:727px;font-size:22px;line-height:71px;color:#151515">Console</div>
<div class="a" style="left:1542px;top:746.5px;width:53px;height:31px;border-radius:16px;background:#2eb150"></div>
<div class="a" style="left:1567.5px;top:751px;width:22px;height:22px;border-radius:50%;background:#fff"></div>
<div class="a" style="left:1606px;top:727px;font-size:22px;line-height:71px;color:#151515">Execute on wake</div>
<div class="a" style="left:1796px;top:742px;width:87.5px;height:42px;border-radius:5px;background:#ececec"></div>
<svg style="left:1810px;top:754px" width="16" height="18" viewBox="0 0 16 18"><path d="M3 2.5 l10 6.5 l-10 6.5 z" fill="#111"/></svg>
<div class="a" style="left:1835px;top:727px;font-size:22px;line-height:71px;color:#151515">Run</div>
<div class="a" style="left:1224px;top:798px;width:681px;height:48px;background:#fff"></div>
<div class="a" style="left:1246px;top:821px;font-family:'Liberation Mono';font-size:22.7px;line-height:30px;color:#151515;white-space:pre">Build completed</div>
</body></html>
